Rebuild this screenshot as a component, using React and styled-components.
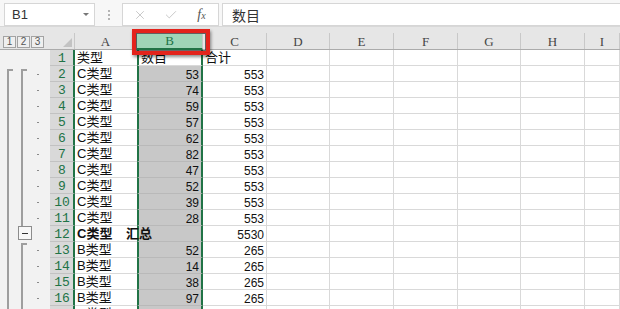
import React from 'react';
import styled, { createGlobalStyle } from 'styled-components';
import { X, Check } from 'lucide-react';

const GREEN = '#217346';
const RULE = '#d9d9d9';
const OUTLINE = '#9e9e9e';

const GlobalStyle = createGlobalStyle`
    html, body {
        margin: 0;
        padding: 0;
        background: #fff;
    }
    body {
        font-family: "Liberation Sans", "Noto Sans CJK SC", sans-serif;
        overflow: hidden;
    }
`;

const COLUMNS = [
    { key: 'A', width: 62, noRule: true },
    { key: 'B', width: 66, selected: true },
    { key: 'C', width: 64 },
    { key: 'D', width: 63 },
    { key: 'E', width: 64 },
    { key: 'F', width: 64 },
    { key: 'G', width: 63 },
    { key: 'H', width: 64 },
    { key: 'I', width: 0, grow: true },
];

const C_VALUES = [53, 74, 59, 57, 62, 82, 47, 52, 39, 28];
const B_VALUES = [52, 14, 38, 97];

const ROWS = [
    { n: 1, a: '类型', b: '数目', c: '合计', text: true },
    ...C_VALUES.map((v, i) => ({ n: i + 2, a: 'C类型', b: v, c: 553 })),
    { n: 12, a: 'C类型 汇总', b: '', c: 5530, bold: true },
    ...B_VALUES.map((v, i) => ({ n: i + 13, a: 'B类型', b: v, c: 265 })),
    { n: 17, a: 'B类型', b: '', c: '' },
];

const Page = styled.div`
    position: relative;
    width: 620px;
    height: 309px;
    overflow: hidden;
    background: #fff;
`;

/* ---------- formula bar ---------- */

const TopBar = styled.div`
    display: flex;
    align-items: flex-start;
    height: 27px;
    box-sizing: border-box;
    padding: 3px 0 0 4px;
    background: #f7f7f7;
    border-bottom: 1px solid #d8d8d8;
`;

const NameBox = styled.div`
    display: flex;
    align-items: center;
    width: 91px;
    height: 23px;
    box-sizing: border-box;
    padding-left: 7px;
    background: #fff;
    border: 1px solid #d6d6d6;
    font-size: 13px;
    color: #333;
`;

const DropArrow = styled.span`
    margin-left: auto;
    margin-right: 5px;
    width: 0;
    height: 0;
    border-left: 3px solid transparent;
    border-right: 3px solid transparent;
    border-top: 3px solid #777;
`;

const Grip = styled.div`
    display: flex;
    flex-direction: column;
    align-items: center;
    justify-content: center;
    gap: 2px;
    width: 27px;
    height: 23px;
    & > span {
        width: 2px;
        height: 2px;
        background: #b4b4b4;
    }
`;

const FxBox = styled.div`
    display: grid;
    grid-template-columns: repeat(3, 31px);
    align-items: center;
    justify-items: center;
    width: 97px;
    height: 23px;
    box-sizing: border-box;
    padding-left: 1px;
    background: #fff;
    border: 1px solid #d6d6d6;
    color: #bdbdbd;
`;

const Fx = styled.span`
    font-family: "Liberation Serif", serif;
    font-style: italic;
    font-size: 14px;
    color: #555;
    & > small {
        font-size: 10px;
    }
`;

const FormulaInput = styled.div`
    flex: 1;
    display: flex;
    align-items: center;
    height: 23px;
    box-sizing: border-box;
    margin-left: 3px;
    padding-left: 9px;
    background: #fff;
    border: 1px solid #d6d6d6;
    border-right: none;
    font-family: "Noto Sans CJK SC", sans-serif;
    font-size: 14px;
    color: #333;
`;

/* ---------- column header ---------- */

const HeaderRow = styled.div`
    display: flex;
    align-items: flex-end;
    height: 23px;
    box-sizing: border-box;
    background: #e6e6e6;
    border-bottom: 1px solid #ababab;
`;

const Levels = styled.div`
    display: flex;
    gap: 1px;
    width: 50px;
    box-sizing: border-box;
    padding-left: 3px;
    margin-bottom: 1px;
    align-self: flex-end;
`;

const LevelButton = styled.div`
    width: 13px;
    height: 12px;
    box-sizing: border-box;
    border: 1px solid #a3a3a3;
    background: #efefef;
    font-size: 10px;
    line-height: 10px;
    text-align: center;
    color: #555;
`;

const Corner = styled.div`
    display: flex;
    justify-content: flex-end;
    align-items: flex-end;
    width: 25px;
    height: 16px;
    box-sizing: border-box;
    padding: 0 2px 2px 0;
    border-right: 1px solid #c8c8c8;
    & > span {
        width: 0;
        height: 0;
        border-left: 9px solid transparent;
        border-bottom: 9px solid #c3c3c3;
    }
`;

const ColHead = styled.div`
    display: flex;
    justify-content: center;
    align-items: flex-end;
    flex: ${(p) => (p.$grow ? '1' : 'none')};
    width: ${(p) => (p.$grow ? 'auto' : `${p.$width}px`)};
    height: 16px;
    box-sizing: border-box;
    padding-bottom: 1px;
    border-right: 1px solid #c8c8c8;
    font-family: "Liberation Serif", serif;
    font-size: 13px;
    color: ${(p) => (p.$selected ? GREEN : '#444')};
    background: ${(p) => (p.$selected ? '#9fd5b7' : 'transparent')};
    border-bottom: ${(p) => (p.$selected ? `2px solid ${GREEN}` : 'none')};
    margin-bottom: ${(p) => (p.$selected ? '-1px' : '0')};
    line-height: 13px;
`;

/* ---------- rows ---------- */

const Row = styled.div`
    display: flex;
    height: 16px;
`;

const Gutter = styled.div`
    display: flex;
    width: 50px;
    box-sizing: border-box;
    padding-left: 7px;
    background: #f2f2f2;
`;

const Lane = styled.div`
    display: flex;
    align-items: flex-start;
    width: 14px;
    box-sizing: border-box;
    margin-top: ${(p) => p.$offset || 0}px;
    border-left: ${(p) => (p.$line ? `2px solid ${OUTLINE}` : 'none')};
`;

const Tick = styled.span`
    width: 4px;
    height: 2px;
    background: ${OUTLINE};
`;

const Dot = styled.span`
    align-self: center;
    width: 2px;
    height: 1px;
    margin-left: 2px;
    background: #8a8a8a;
`;

const MinusBox = styled.div`
    display: flex;
    align-items: center;
    justify-content: center;
    width: 14px;
    height: 14px;
    box-sizing: border-box;
    margin-left: -3px;
    border: 1px solid #8c8c8c;
    background: #f7f7f7;
    & > span {
        width: 6px;
        height: 1px;
        background: #333;
    }
`;

const RowHead = styled.div`
    width: 25px;
    box-sizing: border-box;
    padding-left: 1px;
    background: #d9d9d9;
    border-right: 2px solid ${GREEN};
    border-bottom: 1px solid #c2c2c2;
    font-family: "Liberation Mono", monospace;
    font-size: 13px;
    line-height: 17px;
    text-align: center;
    color: ${GREEN};
`;

const Cell = styled.div`
    position: ${(p) => (p.$spill ? 'relative' : 'static')};
    z-index: ${(p) => (p.$spill ? 1 : 'auto')};
    flex: ${(p) => (p.$grow ? '1' : 'none')};
    width: ${(p) => (p.$grow ? 'auto' : `${p.$width}px`)};
    height: 16px;
    box-sizing: border-box;
    padding: ${(p) => (p.$text ? '1px' : '2px')} 2px 0 2px;
    border-right: ${(p) =>
        p.$selected ? `2px solid ${GREEN}` : p.$noRule ? 'none' : `1px solid ${RULE}`};
    border-left: ${(p) => (p.$selected ? `2px solid ${GREEN}` : 'none')};
    border-bottom: 1px solid ${(p) => (p.$selected && !p.$active ? '#b9b9b9' : RULE)};
    background: ${(p) => (p.$selected && !p.$active ? '#c8c8c8' : '#fff')};
    font-size: ${(p) => (p.$text ? '13px' : '12px')};
    font-weight: ${(p) => (p.$bold ? 700 : 400)};
    word-spacing: ${(p) => (p.$bold ? '10px' : 'normal')};
    line-height: 14px;
    text-align: ${(p) => (p.$right ? 'right' : 'left')};
    white-space: nowrap;
    color: #111;
`;

/* ---------- annotation ---------- */

const Highlight = styled.div`
    position: absolute;
    left: 132px;
    top: 29px;
    width: 78px;
    height: 26px;
    box-sizing: border-box;
    border: 4px solid #e3231c;
    box-shadow: inset 0 0 0 1px rgba(40, 40, 40, 0.7), 1px 2px 3px rgba(0, 0, 0, 0.45);
    pointer-events: none;
`;

const OutlineGutter = ({ n }) => {
    if (n === 1) return <Gutter />;
    if (n === 12) {
        return (
            <Gutter>
                <Lane $line />
                <MinusBox>
                    <span />
                </MinusBox>
            </Gutter>
        );
    }
    const start = n === 2;
    const groupStart = n === 13;
    return (
        <Gutter>
            <Lane $line $offset={start ? 3 : 0}>
                {start && <Tick />}
            </Lane>
            <Lane $line $offset={start ? 3 : groupStart ? 1 : 0}>
                {(start || groupStart) && <Tick />}
            </Lane>
            <Dot />
        </Gutter>
    );
};

const valueFor = (row, key) => {
    if (key === 'A') return row.a;
    if (key === 'B') return row.b;
    if (key === 'C') return row.c;
    return '';
};

export default function App() {
    return (
        <Page>
            <GlobalStyle />
            <TopBar>
                <NameBox>
                    B1
                    <DropArrow />
                </NameBox>
                <Grip>
                    <span />
                    <span />
                    <span />
                </Grip>
                <FxBox>
                    <X size={14} strokeWidth={1.4} />
                    <Check size={14} strokeWidth={1.4} />
                    <Fx>
                        f<small>x</small>
                    </Fx>
                </FxBox>
                <FormulaInput>数目</FormulaInput>
            </TopBar>

            <HeaderRow>
                <Levels>
                    <LevelButton>1</LevelButton>
                    <LevelButton>2</LevelButton>
                    <LevelButton>3</LevelButton>
                </Levels>
                <Corner>
                    <span />
                </Corner>
                {COLUMNS.map((col) => (
                    <ColHead
                        key={col.key}
                        $width={col.width}
                        $grow={col.grow}
                        $selected={col.selected}
                    >
                        {col.key}
                    </ColHead>
                ))}
            </HeaderRow>

            {ROWS.map((row) => (
                <Row key={row.n}>
                    <OutlineGutter n={row.n} />
                    <RowHead>{row.n}</RowHead>
                    {COLUMNS.map((col) => {
                        const value = valueFor(row, col.key);
                        const isText = col.key === 'A' || row.text;
                        return (
                            <Cell
                                key={col.key}
                                $width={col.width}
                                $grow={col.grow}
                                $noRule={col.noRule}
                                $selected={col.selected}
                                $active={col.selected && row.n === 1}
                                $text={isText}
                                $right={!isText}
                                $bold={row.bold && col.key === 'A'}
                                $spill={row.bold && col.key === 'A'}
                            >
                                {value}
                            </Cell>
                        );
                    })}
                </Row>
            ))}

            <Highlight />
        </Page>
    );
}
